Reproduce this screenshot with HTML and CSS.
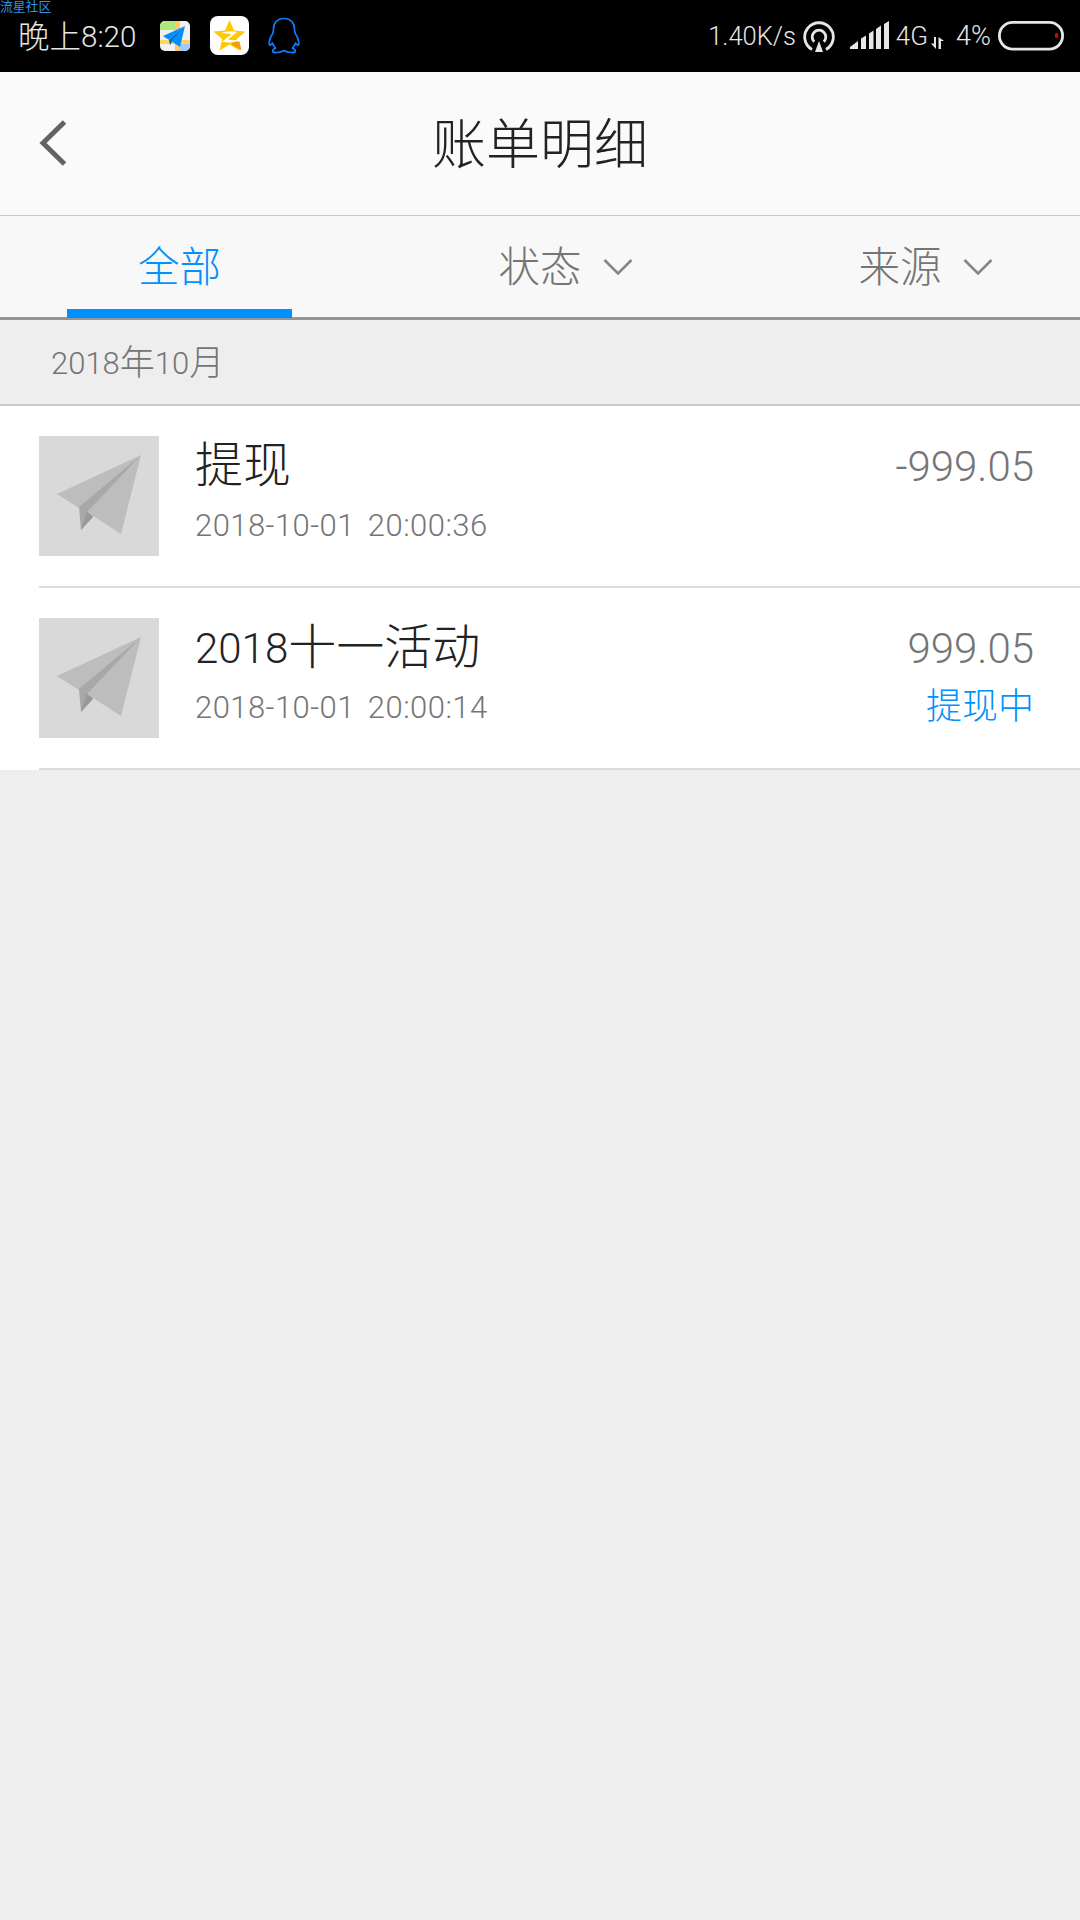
FILE: index.html
```
<!DOCTYPE html>
<html lang="zh-CN">

<head>
    <meta charset="UTF-8">
    <meta name="viewport" content="width=device-width, initial-scale=1.0">
    <title>账单明细</title>
    <link rel="stylesheet" href="styles.css">
</head>

<body>
    <div class="status-bar">
        <span class="watermark">流星社区</span>
        <div class="status-left">
            <span class="clock">晚上<span class="num">8:20</span></span>
            <svg class="icon-map" width="30" height="30" viewBox="0 0 30 30">
                <clipPath id="mapClip"><rect width="30" height="30" rx="5"/></clipPath>
                <g clip-path="url(#mapClip)">
                    <rect width="30" height="30" fill="#f1f1ee"/>
                    <path d="M0 0h16v9H0z" fill="#aee67f"/>
                    <path d="M20 23l10-3v10H20z" fill="#a5c8fb"/>
                    <path d="M0 19h30v4H0z" fill="#ffd55c"/>
                    <path d="M15 0h5v30h-5z" fill="#ffc969"/>
                </g>
                <path d="M25 5L3 15l6 4z" fill="#0090ff"/>
                <path d="M25 5L9 19l1 5 2-3z" fill="#0068c8"/>
                <path d="M25 5L11 20l9 6z" fill="#0090ff"/>
            </svg>
            <svg class="icon-star" width="39" height="39" viewBox="0 0 39 39">
                <rect width="39" height="39" rx="8" fill="#fff"/>
                <path d="M19.500 4l4.500 10.500 11.500 1-8.700 7.600 2.700 11.400-10-6-10 6 2.700-11.400L3.500 15.500l11.500-1z" fill="#ffc800"/>
                <path d="M22 26.500l7.500-1 2 9-9-5.500z" fill="#f0a000"/>
                <path d="M11 17q8-3 16-1l-9 7.500q7 1.500 12-.5-5 5-18 2.700l9.500-7.400q-5-1-10.500-1.300z" fill="#fff"/>
            </svg>
            <svg class="icon-qq" width="32" height="37" viewBox="0 0 32 37" fill="none" stroke="#0a7dff" stroke-width="1.700" stroke-linejoin="round">
                <path d="M16 1.500C9 1.500 5.500 6.500 5.500 12c0 2-.2 3-.8 4.500C2.500 20 1 23 1.200 27c.2 2.200 1.800 1 3.300-1 .6 2.200 1.500 3.800 3 5.200-4 1.600-4 5 1.500 4.300 3-.2 5-.8 7-2 2 1.200 4 1.800 7 2 5.500.7 5.500-2.700 1.500-4.300 1.500-1.400 2.400-3 3-5.200 1.500 2 3.100 3.200 3.300 1 .2-4-1.300-7-3.500-10.500-.6-1.500-.8-2.500-.8-4.500C26.500 6.500 23 1.500 16 1.500z"/>
            </svg>
        </div>
        <div class="status-right">
            <span class="num speed">1.40K/s</span>
            <svg class="icon-hotspot" width="32" height="31" viewBox="0 0 32 31" fill="none" stroke="#e6e6e6">
                <path d="M9 28.500a14.300 14.300 0 1 1 14 0" stroke-width="2.800"/>
                <path d="M11.200 20.800a6.800 6.800 0 1 1 9.600 0" stroke-width="2.800"/>
                <path d="M16 20l4 11h-8z" fill="#e6e6e6" stroke="none"/>
            </svg>
            <svg class="icon-signal" width="39" height="28" viewBox="0 0 39 28" fill="#e6e6e6">
                <path d="M0 28v-2l8-6v8zM11 28V17.500l5-3V28zM19 28V12.500l4.500-3V28zM26 28V8l5-3.500V28zM34 28V3l5-3v28z"/>
            </svg>
            <span class="num net">4G</span>
            <svg class="icon-data" width="13" height="13" viewBox="0 0 13 13" fill="#e6e6e6">
                <path d="M0 7.500h3V1h2v12zM7.500 13V1L13 5h-3v8z"/>
            </svg>
            <span class="num percent">4%</span>
            <svg class="icon-battery" width="66" height="30" viewBox="0 0 66 30">
                <rect x="1.400" y="1.400" width="63.200" height="26.700" rx="13.300" fill="none" stroke="#e6e6e6" stroke-width="2.800"/>
                <rect x="57" y="12" width="3" height="5" rx="1.300" fill="#e00000"/>
            </svg>
        </div>
    </div>

    <header>
        <svg class="back" width="28" height="46" viewBox="0 0 28 46" fill="none" stroke="#636363" stroke-width="5">
            <path d="M25.500 2L4 23l21.500 21"/>
        </svg>
        <h1>账单明细</h1>
    </header>

    <nav>
        <ul>
            <li class="active">全部</li>
            <li>状态
                <svg class="arrow" width="30" height="18" viewBox="0 0 30 18"><path d="M1.500 2L15 15.500 28.500 2"/></svg>
            </li>
            <li>来源
                <svg class="arrow" width="30" height="18" viewBox="0 0 30 18"><path d="M1.500 2L15 15.500 28.500 2"/></svg>
            </li>
        </ul>
    </nav>

    <main>
        <h2><span class="num">2018</span>年<span class="num">10</span>月</h2>
        <ul class="bill-list">
            <li class="bill">
                <svg class="thumb" width="120" height="120" viewBox="0 0 120 120">
                    <path d="M102 19L18 58l22 14z" fill="#bdbdbd"/>
                    <path d="M102 19L40 71l2 23 12-14z" fill="#a8a8a8"/>
                    <path d="M48 75l-6 19 12-13z" fill="#989898"/>
                    <path d="M102 19L48 76l34 22z" fill="#bdbdbd"/>
                </svg>
                <div class="info">
                    <h3>提现</h3>
                    <p class="num">2018-10-01 20:00:36</p>
                </div>
                <div class="amount">
                    <p class="num">-999.05</p>
                </div>
            </li>
            <li class="bill">
                <svg class="thumb" width="120" height="120" viewBox="0 0 120 120">
                    <path d="M102 19L18 58l22 14z" fill="#bdbdbd"/>
                    <path d="M102 19L40 71l2 23 12-14z" fill="#a8a8a8"/>
                    <path d="M48 75l-6 19 12-13z" fill="#989898"/>
                    <path d="M102 19L48 76l34 22z" fill="#bdbdbd"/>
                </svg>
                <div class="info">
                    <h3><span class="num">2018</span>十一活动</h3>
                    <p class="num">2018-10-01 20:00:14</p>
                </div>
                <div class="amount">
                    <p class="num">999.05</p>
                    <p class="state">提现中</p>
                </div>
            </li>
        </ul>
    </main>
</body>

</html>
```
FILE: styles.css
```
* {
    box-sizing: border-box;
}

body {
    margin: 0;
    min-height: 1920px;
    font-family: 'Noto Sans CJK SC', sans-serif;
    font-weight: 300;
    background: #eee;
    color: #222;
}

h1,
h2,
h3,
p,
ul {
    margin: 0;
    padding: 0;
    font-weight: 300;
    list-style: none;
}

svg {
    display: block;
    flex: none;
}

.num {
    font-family: Roboto, 'Noto Sans CJK SC', sans-serif;
    white-space: nowrap;
}

/* status bar */
.status-bar {
    position: relative;
    display: flex;
    justify-content: space-between;
    height: 72px;
    padding: 0 16px 0 18px;
    background: #000;
    color: #e6e6e6;
}

.watermark {
    position: absolute;
    left: 0;
    top: 0;
    font-size: 12.800px;
    line-height: 11px;
    font-weight: 400;
    color: #2f95e6;
}

.status-left,
.status-right {
    display: flex;
    align-items: center;
    height: 71px;
}

.clock {
    width: 142px;
    font-size: 31.500px;
    line-height: 36px;
    white-space: nowrap;
}

.clock .num {
    font-size: 29.500px;
    vertical-align: 1px;
}

.icon-star {
    margin-left: 20px;
}

.icon-qq {
    margin-left: 19px;
}

.status-right .num {
    font-size: 27px;
    line-height: 36px;
    padding-top: 1px;
}

.status-right .speed {
    font-size: 25.500px;
}

.status-right .net {
    font-size: 26px;
}

.icon-hotspot {
    margin: 2px 0 0 7px;
}

.icon-signal {
    margin: 0 7px 1px 15px;
}

.icon-data {
    margin: 13px 12px 0 3px;
}

.icon-battery {
    margin-left: 7px;
}

/* title */
header {
    display: flex;
    align-items: center;
    height: 144px;
    padding: 0 39px;
    background: #fafafa;
    border-bottom: 1px solid #c8c8c8;
}

.back {
    margin-bottom: 1px;
}

h1 {
    flex: 1;
    margin-right: 28px;
    padding-bottom: 5px;
    text-align: center;
    font-size: 54px;
    line-height: 138px;
}

/* filter tabs */
nav {
    height: 104px;
    background: #f8f8f8;
    border-bottom: 3px solid #969696;
}

nav ul {
    display: grid;
    grid-template-columns: repeat(3, 1fr);
}

nav li {
    display: flex;
    justify-content: center;
    align-items: center;
    height: 102px;
    padding-bottom: 6px;
    font-size: 41.500px;
    line-height: 60px;
    color: #757575;
}

nav .active {
    width: 225px;
    margin-left: 67px;
    padding: 3px 0 0;
    border-bottom: 9px solid #0091ff;
    color: #0091ff;
}

.arrow {
    margin: 5px -51px 0 21px;
    fill: none;
    stroke: #858585;
    stroke-width: 2.500;
}

/* bills */
h2 {
    height: 86px;
    padding-left: 51px;
    border-bottom: 2px solid #c9c9c9;
    font-size: 35px;
    line-height: 79px;
    color: #757575;
}

h2 .num {
    font-size: 31px;
    vertical-align: 1px;
}

.bill-list {
    background: #fff;
}

.bill {
    display: flex;
    height: 182px;
    margin-left: 39px;
    padding: 30px 46px 0 0;
    border-bottom: 2px solid #dcdcdc;
}

.thumb {
    background: #d9d9d9;
}

.info {
    flex: 1;
    margin-left: 36px;
}

h3 {
    height: 56px;
    font-size: 48px;
    line-height: 50px;
}

h3 .num {
    font-size: 42px;
    line-height: 1;
    vertical-align: 1px;
}

.info p {
    margin-top: 14px;
    font-size: 31px;
    line-height: 40px;
    letter-spacing: 0.450px;
    word-spacing: 5px;
    color: #757575;
}

.amount {
    text-align: right;
    color: #757575;
}

.amount .num {
    font-size: 42px;
    line-height: 62px;
}

.amount .state {
    font-size: 36px;
    line-height: 46px;
    color: #0091ff;
}
```
